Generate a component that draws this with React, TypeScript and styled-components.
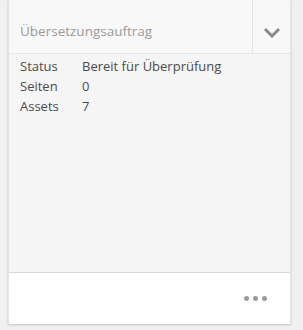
import React from 'react';
import styled, { createGlobalStyle } from 'styled-components';

const GlobalStyle = createGlobalStyle`
  html, body {
    margin: 0;
    padding: 0;
    background: #f0f0f0;
  }
  body {
    font-family: "Open Sans", "Liberation Sans", sans-serif;
  }
`;

const Page = styled.div`
  width: 303px;
  height: 330px;
  padding: 0 12px 6px 8px;
  box-sizing: border-box;
`;

const Card = styled.div`
  display: flex;
  flex-direction: column;
  height: 324px;
  background: #f5f5f5;
  border-left: 1px solid #e4e4e4;
  border-right: 1px solid #e4e4e4;
  box-shadow: 0 1px 2px rgba(0, 0, 0, 0.18);
  box-sizing: border-box;
`;

const Header = styled.div`
  display: flex;
  height: 54px;
  background: #f8f8f8;
  border-bottom: 1px solid #e6e6e6;
  box-sizing: border-box;
`;

const Title = styled.div`
  flex: 1;
  display: flex;
  align-items: center;
  padding: 8px 11px 0;
  font-size: 13.5px;
  color: #9a9a9a;
`;

const ToggleButton = styled.div`
  width: 37px;
  padding-top: 11px;
  display: flex;
  align-items: center;
  justify-content: center;
  border-left: 1px solid #e6e6e6;
`;

const Body = styled.div`
  flex: 1;
  padding: 2px 11px;
`;

const InfoRow = styled.div`
  display: grid;
  grid-template-columns: 62px 1fr;
  font-size: 13px;
  line-height: 20px;
  color: #4b4b4b;
`;

const Footer = styled.div`
  height: 51px;
  display: flex;
  align-items: center;
  justify-content: flex-end;
  padding-right: 23px;
  background: #ffffff;
  border-top: 1px solid #d9d9d9;
`;

const Dots = styled.div`
  display: flex;
  gap: 4px;
`;

const Dot = styled.span`
  width: 5px;
  height: 5px;
  border-radius: 50%;
  background: #9a9a9a;
`;

const rows = [
  { label: 'Status', value: 'Bereit für Überprüfung' },
  { label: 'Seiten', value: '0' },
  { label: 'Assets', value: '7' },
];

export default function App() {
  return (
    <Page>
      <GlobalStyle />
      <Card>
        <Header>
          <Title>Übersetzungsauftrag</Title>
          <ToggleButton>
            <svg width="18" height="11" viewBox="0 0 18 11">
              <path d="M2 2 L9 9 L16 2" fill="none" stroke="#8a8a8a" strokeWidth="3" />
            </svg>
          </ToggleButton>
        </Header>
        <Body>
          {rows.map((r) => (
            <InfoRow key={r.label}>
              <span>{r.label}</span>
              <span>{r.value}</span>
            </InfoRow>
          ))}
        </Body>
        <Footer>
          <Dots>
            <Dot />
            <Dot />
            <Dot />
          </Dots>
        </Footer>
      </Card>
    </Page>
  );
}
